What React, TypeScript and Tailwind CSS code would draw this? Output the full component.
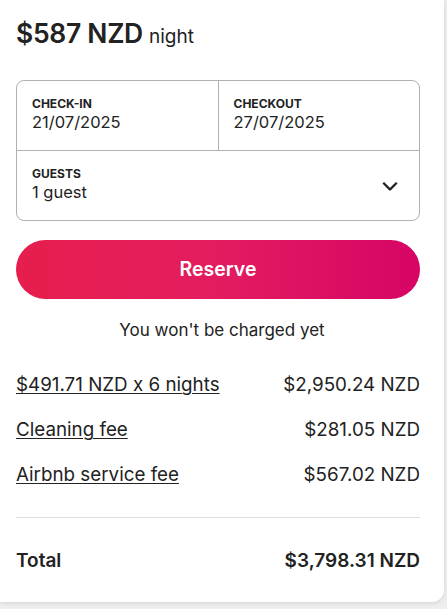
import React from 'react';

const lines = [
  { label: '$491.71 NZD x 6 nights', amount: '$2,950.24 NZD' },
  { label: 'Cleaning fee', amount: '$281.05 NZD' },
  { label: 'Airbnb service fee', amount: '$567.02 NZD' },
];

export default function App() {
  return (
    <div className="h-[609px] w-[447px] overflow-hidden bg-[#eeeeee] text-[#222222]" style={{ fontFamily: 'Inter, "Noto Sans", sans-serif' }}>
      <div className="h-[602px] w-[444px] rounded-br-xl bg-white px-4 pt-[14px] shadow-[0_1px_4px_rgba(0,0,0,0.12)]">
        <div className="flex items-baseline gap-1.5">
          <span className="text-[26.5px] font-semibold tracking-[-0.3px]">$587 NZD</span>
          <span className="text-[19px]">night</span>
        </div>

        <div className="mt-[26px] w-[404px] rounded-lg border border-[#b0b0b0]">
          <div className="flex h-[70px] border-b border-[#b0b0b0]">
            <div className="flex-1 border-r border-[#b0b0b0] px-[15px] pt-[15px]">
              <div className="text-[12px] font-bold leading-4">CHECK-IN</div>
              <div className="text-[16.5px] leading-5">21/07/2025</div>
            </div>
            <div className="flex-1 px-[15px] pt-[15px]">
              <div className="text-[12px] font-bold leading-4">CHECKOUT</div>
              <div className="text-[16.5px] leading-5">27/07/2025</div>
            </div>
          </div>
          <div className="flex h-[69px] items-center justify-between pl-[15px] pr-5">
            <div className="-mt-0.5">
              <div className="text-[12px] font-bold leading-4">GUESTS</div>
              <div className="text-[16.5px] leading-5">1 guest</div>
            </div>
            <svg width="18" height="18" viewBox="0 0 32 32" fill="none" stroke="#222222" strokeWidth="4">
              <path d="M28 12 16.7 23.3a1 1 0 0 1-1.4 0L4 12" />
            </svg>
          </div>
        </div>

        <button className="mt-[19px] flex h-[59px] w-[404px] items-center justify-center rounded-full bg-[linear-gradient(to_right,#e61e4d,#e31c5f_50%,#d70466)] text-[19.5px] font-semibold text-white">
          Reserve
        </button>

        <div className="mt-[19px] text-center text-[17px] text-[#222222]">You won't be charged yet</div>

        <div className="mt-[19px] w-[404px]">
          {lines.map((l) => (
            <div key={l.label} className="flex h-[45px] items-center justify-between text-[18.8px]">
              <span className="underline decoration-1 underline-offset-2">{l.label}</span>
              <span>{l.amount}</span>
            </div>
          ))}
        </div>

        <div className="mt-[20px] w-[404px] border-t border-[#dddddd]" />

        <div className="mt-[29px] flex w-[404px] items-center justify-between text-[19px] font-semibold">
          <span>Total</span>
          <span>$3,798.31 NZD</span>
        </div>
      </div>
    </div>
  );
}
